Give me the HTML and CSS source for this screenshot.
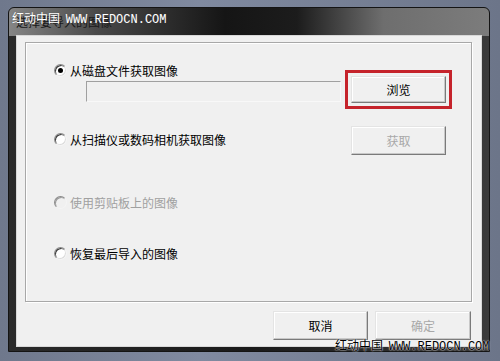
FILE: index.html
```html
<!DOCTYPE html>
<html lang="zh-CN">
<head>
    <meta charset="UTF-8">
    <meta name="viewport" content="width=device-width, initial-scale=1.0">
    <title>选择要导入的图像</title>
    <link rel="stylesheet" href="styles.css">
</head>
<body>

    <div class="window">
        <!-- Barra de título -->
        <div class="titlebar">选择要导入的图像</div>

        <div class="client">
            <div class="group">
                <label class="option">
                    <span class="radio checked"></span>从磁盘文件获取图像
                </label>
                <div class="file-row">
                    <div class="field"></div>
                    <button class="btn btn-mark">浏览</button>
                </div>

                <div class="option-row">
                    <label class="option">
                        <span class="radio"></span>从扫描仪或数码相机获取图像
                    </label>
                    <button class="btn" disabled>获取</button>
                </div>

                <label class="option option-disabled">
                    <span class="radio"></span>使用剪贴板上的图像
                </label>

                <label class="option option-last">
                    <span class="radio"></span>恢复最后导入的图像
                </label>
            </div>

            <div class="actions">
                <button class="btn">取消</button>
                <button class="btn btn-wide" disabled>确定</button>
            </div>
        </div>
    </div>

    <!-- Marcas de agua -->
    <div class="watermark wm-top">红动中国 <span>WWW.REDOCN.COM</span></div>
    <div class="watermark wm-bottom">红动中国 <span>WWW.REDOCN.COM</span></div>

</body>
</html>
```

FILE: styles.css
```css
body {
    margin: 0;
    padding: 7px 0 0 8px;
    height: 361px;
    box-sizing: border-box;
    overflow: hidden;
    background: linear-gradient(to right, #6f788c, #808aa0 40%, #6c7589);
    font-family: "Noto Sans CJK SC", "Liberation Sans", sans-serif;
    font-size: 12px;
    position: relative;
}

.window {
    width: 482px;
    height: 345px;
    box-sizing: border-box;
    padding: 0 7px 5px 7px;
    border-radius: 6px 6px 0 0;
    border: 1px solid #141414;
    background:
        linear-gradient(to right, #858585 0%, #4a4a4a 18%, #151515 45%, #1c1c1c 60%, #6e6e6e 78%, #7c7c7c 100%) top / 100% 28px no-repeat,
        linear-gradient(to right, #2a2a2a, #1a1a1a 50%, #3a3a3a);
}

.titlebar {
    height: 27px;
    line-height: 28px;
    color: #1a1a1a;
    font-size: 12px;
}

.client {
    height: 312px;
    box-sizing: border-box;
    background-color: #f0f0f0;
    border: 1px solid #d8d8d8;
    padding: 6px 9px 0 8px;
}

/* Marco del grupo */
.group {
    height: 260px;
    box-sizing: border-box;
    border: 1px solid #a8a8a8;
    box-shadow: 1px 1px 0 #ffffff, inset 1px 1px 0 #ffffff;
    padding: 19px 25px 0 28px;
}

.option {
    display: flex;
    align-items: center;
    height: 16px;
    color: #000000;
    white-space: nowrap;
}

.option-disabled {
    color: #a0a0a0;
    margin-top: 39px;
}

.option-last {
    margin-top: 35px;
}

.radio {
    width: 11px;
    height: 11px;
    border-radius: 50%;
    border: 1px solid;
    border-color: #8a8a8a #f4f4f4 #f4f4f4 #8a8a8a;
    box-shadow: inset 1px 1px 0 #3c3c3c, inset -1px -1px 0 #dcdcdc;
    background-color: #ffffff;
    margin-right: 3px;
    position: relative;
    flex-shrink: 0;
}
.option-disabled .radio {
    background-color: #f0f0f0;
    box-shadow: inset 1px 1px 0 #9a9a9a;
}
.radio.checked::after {
    content: "";
    position: absolute;
    left: 3px;
    top: 3px;
    width: 5px;
    height: 5px;
    border-radius: 50%;
    background-color: #000000;
}

.file-row {
    display: flex;
    align-items: flex-end;
    gap: 10px;
    margin-top: -2px;
    padding-left: 32px;
}

.field {
    width: 255px;
    height: 21px;
    box-sizing: border-box;
    border-top: 1px solid #a0a0a0;
    border-left: 1px solid #a0a0a0;
    border-bottom: 1px solid #f8f8f8;
    border-right: 1px solid #f8f8f8;
    margin-bottom: 1px;
}

.option-row {
    display: flex;
    align-items: center;
    justify-content: space-between;
    margin-top: 23px;
}
.option-row .option {
    margin-top: -3px;
}

/* Botones */
.btn {
    width: 95px;
    height: 27px;
    box-sizing: border-box;
    background-color: #f0f0f0;
    border: 1px solid;
    border-color: #e4e4e4 #7a7a7a #7a7a7a #e4e4e4;
    box-shadow: inset -1px -1px 0 #c8c8c8, inset 1px 1px 0 #ffffff;
    font-family: "Noto Sans CJK SC", "Liberation Sans", sans-serif;
    font-size: 12px;
    color: #000000;
    padding: 0;
}
.btn:disabled {
    color: #a8a8a8;
}
.btn-mark {
    outline: 3px solid #c5232b;
    outline-offset: 3px;
}
.btn-wide {
    width: 96px;
}

.option-row .btn {
    height: 29px;
}

.actions {
    display: flex;
    justify-content: flex-end;
    gap: 7px;
    margin-top: 9px;
    margin-right: 1px;
}
.actions .btn {
    height: 29px;
}

/* Marcas de agua */
.watermark {
    position: absolute;
    font-size: 12px;
    white-space: nowrap;
}
.watermark span {
    font-family: "Liberation Mono", monospace;
    font-size: 12px;
    margin-left: 3px;
}
.wm-top {
    left: 12px;
    top: 9px;
    color: #ffffff;
    text-shadow: 0 0 1px #555555;
}
.wm-bottom {
    left: 335px;
    top: 336px;
    color: #000000;
    text-shadow: 0 0 2px #ffffff, 0 0 1px #ffffff;
}
```
